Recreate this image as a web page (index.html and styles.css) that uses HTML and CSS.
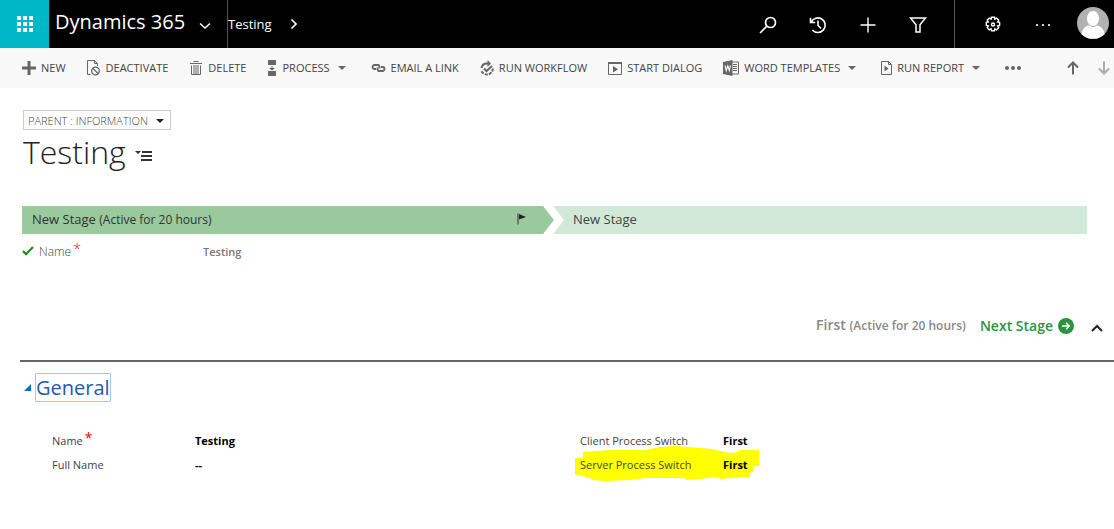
FILE: index.html
```html
<!DOCTYPE html>
<html lang="en">
<head>
    <meta charset="UTF-8">
    <meta name="viewport" content="width=device-width, initial-scale=1.0">
    <title>Parent: Testing - Dynamics 365</title>
    <link rel="stylesheet" href="styles.css">
</head>
<body>
    <header class="navbar">
        <button class="launcher" aria-label="Apps">
            <svg width="16" height="16" viewBox="0 0 16 16" fill="#fff"><path d="M0 0h4v4H0zM6 0h4v4H6zM12 0h4v4h-4zM0 6h4v4H0zM6 6h4v4H6zM12 6h4v4h-4zM0 12h4v4H0zM6 12h4v4H6zM12 12h4v4h-4z"/></svg>
        </button>
        <button class="brand">
            <span>Dynamics 365</span>
            <svg width="12" height="8" viewBox="0 0 12 8" fill="none" stroke="#fff" stroke-width="1.5"><path d="M1 1.5l5 4.500 5-4.500"/></svg>
        </button>
        <a class="crumb" href="#">
            <span>Testing</span>
            <svg width="8" height="12" viewBox="0 0 8 12" fill="none" stroke="#fff" stroke-width="1.7"><path d="M1.500 1.500L6 6l-4.500 4.500"/></svg>
        </a>
        <div class="nav-tools">
            <button class="tool" aria-label="Search">
                <svg width="18" height="18" viewBox="0 0 18 18" fill="none" stroke="#fff" stroke-width="1.7"><circle cx="11.500" cy="6.500" r="5"/><path d="M8 10l-7 7"/></svg>
            </button>
            <button class="tool" aria-label="Recent">
                <svg width="18" height="18" viewBox="0 0 18 18" fill="none" stroke="#fff" stroke-width="1.600"><path d="M2.200 6.200A7.300 7.300 0 1 1 3.400 14M1.500 1.800v4.700h4.700M9 4.500v5l3 2.800"/></svg>
            </button>
            <button class="tool" aria-label="Create">
                <svg width="16" height="16" viewBox="0 0 16 16" fill="none" stroke="#fff" stroke-width="1.400"><path d="M8 .5v15M.5 8h15"/></svg>
            </button>
            <button class="tool" aria-label="Advanced find">
                <svg width="18" height="16" viewBox="0 0 18 16" fill="none" stroke="#fff" stroke-width="1.500"><path d="M1.500 1h15L11 7.700V15H7V7.700z"/></svg>
            </button>
        </div>
        <div class="nav-user">
            <button class="tool" aria-label="Settings">
                <svg width="18" height="18" viewBox="0 0 18 18" fill="none" stroke="#fff" stroke-width="1.400"><path d="M7.500 1.200h3l.4 1.900 1.700-1 2.100 2.100-1.100 1.700 2 .4v3.200l-2 .4 1.100 1.800-2.100 2.200-1.800-1.100-.4 2H7.500l-.4-2-1.800 1.100-2.100-2.200 1.100-1.800-2-.4V6.300l2-.4-1.100-1.700 2.100-2.100 1.800 1z"/><circle cx="9" cy="8.500" r="1.500"/></svg>
            </button>
            <button class="tool" aria-label="More">
                <svg width="16" height="4" viewBox="0 0 16 4" fill="#ccc"><path d="M1 1h2v2H1zM7 1h2v2H7zM13 1h2v2h-2z"/></svg>
            </button>
            <button class="avatar" aria-label="Account">
                <svg width="32" height="32" viewBox="0 0 32 32"><clipPath id="round"><circle cx="16" cy="16" r="16"/></clipPath><g clip-path="url(#round)"><path fill="#b1b1b1" d="M0 0h32v32H0z"/><path fill="#fff" stroke="#b1b1b1" d="M3.500 32c0-9 4-14 9-14h7c5 0 9 5 9 14z"/><ellipse cx="16" cy="11.500" rx="6.500" ry="8" fill="#fff" stroke="#b1b1b1"/></g></svg>
            </button>
        </div>
    </header>

    <nav class="commands">
        <button class="command">
            <svg width="14" height="14" viewBox="0 0 14 14" fill="#666"><path d="M5.500 0h3v5.500H14v3H8.500V14h-3V8.500H0v-3h5.500z"/></svg>
            NEW
        </button>
        <button class="command">
            <svg width="14" height="16" viewBox="0 0 14 16" fill="none" stroke="#666"><path d="M3.500 14.500h-3V.5h7l3 3V6M7.500.5v3h3"/><circle cx="8.500" cy="11" r="3.800" stroke-width="1.300"/><path d="M6 8.500l5 5" stroke-width="1.300"/></svg>
            DEACTIVATE
        </button>
        <button class="command">
            <svg width="14" height="14" viewBox="0 0 14 14" fill="none" stroke="#666"><path d="M4.500.5h5M1 2.500h12" stroke-width="1.200"/><path d="M2.500 4.500v9h9v-9M5 4v9M7 4v9M9 4v9"/></svg>
            DELETE
        </button>
        <button class="command">
            <svg width="10" height="16" viewBox="0 0 10 16" fill="#666"><path d="M1 0h8v5H1zM1 11h8v5H1zM4.500 6h1v2H8l-3 2.500L2 8h2.500z"/></svg>
            PROCESS
            <span class="caret"></span>
        </button>
        <button class="command">
            <svg width="15" height="8" viewBox="0 0 15 8" fill="none" stroke="#666" stroke-width="1.800"><path d="M5 5H3.500A2 2 0 0 1 3.500 1H7q1.500 0 1.500 2v1.500M10 3h1.500A2 2 0 0 1 11.500 7H8Q6.500 7 6.500 5V3.500"/></svg>
            EMAIL A LINK
        </button>
        <button class="command">
            <svg width="14" height="16" viewBox="0 0 14 16" fill="none" stroke="#666" stroke-width="2"><path d="M1.500 8A5.500 5.500 0 0 1 7 3.500h1"/><path d="M7.500 0v7L11 3.500z" fill="#666" stroke="none"/><path d="M12.800 8.500A5.900 5.900 0 0 1 1.500 11" stroke-dasharray="3 1.200"/><path d="M4 8.500l2.500 2.500L12 6"/></svg>
            RUN WORKFLOW
        </button>
        <button class="command">
            <svg width="14" height="14" viewBox="0 0 14 14" fill="none" stroke="#666"><path d="M.5 1.500h13v12H.5z"/><path d="M0 1h14v2H0zM5 5l5 3.200-5 3.300z" fill="#666" stroke="none"/></svg>
            START DIALOG
        </button>
        <button class="command">
            <svg width="16" height="16" viewBox="0 0 16 16" fill="none" stroke="#666"><path d="M9 2h6.500v12H9M10 4.500h4M10 6.500h4M10 8.500h4M10 10.500h4"/><path d="M0 2l9.500-2v16L0 14z" fill="#666" stroke="none"/><path d="M2 5.500l1.200 5L4.800 6l1.500 4.500 1.200-5" stroke="#fff" stroke-width="1.100"/></svg>
            WORD TEMPLATES
            <span class="caret"></span>
        </button>
        <button class="command">
            <svg width="11" height="14" viewBox="0 0 11 14" fill="none" stroke="#666"><path d="M.5.500h7l3 3v10H.5zM7.500.5v3h3"/><path d="M3.500 4.500l4 3-4 3z" fill="#666" stroke="none"/></svg>
            RUN REPORT
            <span class="caret"></span>
        </button>
        <button class="command" aria-label="More commands">
            <svg width="16" height="4" viewBox="0 0 16 4" fill="#666"><circle cx="2" cy="2" r="2"/><circle cx="8" cy="2" r="2"/><circle cx="14" cy="2" r="2"/></svg>
        </button>
        <div class="record-nav">
            <button class="command" aria-label="Previous record">
                <svg width="12" height="14" viewBox="0 0 12 14" fill="none" stroke="#666" stroke-width="2"><path d="M6 13.500V2M1 6.500l5-5 5 5"/></svg>
            </button>
            <button class="command" aria-label="Next record">
                <svg width="12" height="14" viewBox="0 0 12 14" fill="none" stroke="#aaa" stroke-width="2"><path d="M6 .5V12M1 7.500l5 5 5-5"/></svg>
            </button>
        </div>
    </nav>

    <main>
        <div class="record-head">
            <button class="form-select">PARENT : INFORMATION <span class="caret dark"></span></button>
            <div class="title-row">
                <h1>Testing</h1>
                <button class="list-toggle" aria-label="Open form navigation">
                    <svg width="18" height="12" viewBox="0 0 18 12" fill="#333"><path d="M0 1h6L3 4zM7 1h10v2H7zM6 5h11v2H6zM6 9h11v2H6z"/></svg>
                </button>
            </div>
        </div>

        <section class="process">
            <div class="stages">
                <button class="stage active">
                    <span>New Stage <small>(Active for 20 hours)</small></span>
                    <svg width="9" height="12" viewBox="0 0 9 12"><path d="M1 .5v11" stroke="#333"/><path d="M2 1l7 3-7 2.500z" fill="#222"/></svg>
                </button>
                <button class="stage">New Stage</button>
            </div>
            <dl class="step">
                <dt>
                    <svg width="12" height="10" viewBox="0 0 12 10" fill="none" stroke="#1b8a1b" stroke-width="2.200"><path d="M1 5l3 3.200L11 1"/></svg>
                    <span>Name<sup>*</sup></span>
                </dt>
                <dd>Testing</dd>
            </dl>
            <div class="stage-actions">
                <span class="entity">First <small>(Active for 20 hours)</small></span>
                <button class="next">
                    Next Stage
                    <svg width="16" height="16" viewBox="0 0 16 16"><circle cx="8" cy="8" r="8" fill="#2b9440"/><path d="M4 8h7M8 4.800L11.200 8 8 11.200" fill="none" stroke="#fff" stroke-width="1.500"/></svg>
                </button>
                <button class="collapse" aria-label="Collapse process">
                    <svg width="12" height="8" viewBox="0 0 12 8" fill="none" stroke="#222" stroke-width="2"><path d="M1 7l5-5 5 5"/></svg>
                </button>
            </div>
        </section>

        <section class="general">
            <h2>
                <svg width="7" height="7" viewBox="0 0 7 7"><path d="M7 0v7H0z" fill="#0072c6"/></svg>
                <a href="#general">General</a>
            </h2>
            <div class="fields" id="general">
                <dl>
                    <div class="field"><dt>Name<sup>*</sup></dt><dd>Testing</dd></div>
                    <div class="field"><dt>Full Name</dt><dd>--</dd></div>
                </dl>
                <dl>
                    <div class="field"><dt>Client Process Switch</dt><dd>First</dd></div>
                    <div class="field">
                        <dt>Server Process Switch</dt><dd>First</dd>
                        <svg class="marker" width="186" height="36" viewBox="0 0 186 36"><path fill="#ff0" d="M0 12H8V6L35 4H70L85 1 100 0 125 2 137 3 155 7 163 6 165 4H184V20H178V26L175 27V31L155 32 145 33 142 31 125 33 112 34 108 32H72L55 34 30 35 18 34 15 32 3 29 0 28z"/></svg>
                    </div>
                </dl>
            </div>
        </section>
    </main>
</body>
</html>
```
FILE: styles.css
```css
* {
    box-sizing: border-box;
}

body {
    margin: 0;
    background: #fff;
    color: #444;
    font-family: 'Segoe UI', 'Open Sans', 'Noto Sans', sans-serif;
    font-size: 12px;
    line-height: 16px;
}

button {
    margin: 0;
    padding: 0;
    border: 0;
    background: none;
    color: inherit;
    font: inherit;
    cursor: pointer;
}

a {
    color: inherit;
    text-decoration: none;
}

svg {
    display: block;
    flex: none;
}

h1, h2, dl, dd {
    margin: 0;
}

main {
    padding-bottom: 24px;
}

/* top bar */
.navbar {
    display: flex;
    height: 48px;
    background: #000;
    color: #fff;
}

.launcher {
    display: flex;
    align-items: center;
    justify-content: center;
    width: 49px;
    background: #00b7c7;
}

.brand {
    display: flex;
    align-items: center;
    justify-content: space-between;
    width: 179px;
    padding: 0 16px 4px 6px;
    border-right: 1px solid #555;
    font-size: 20px;
    line-height: 24px;
}

.brand svg {
    margin-top: 8px;
}

.crumb {
    display: flex;
    align-items: center;
    gap: 18px;
    font-size: 13px;
}

.nav-tools {
    display: flex;
    margin-left: auto;
    padding-right: 11px;
    border-right: 1px solid #555;
}

.nav-user {
    display: flex;
    padding-left: 13px;
}

.tool {
    display: flex;
    align-items: center;
    justify-content: center;
    width: 50px;
    padding-top: 2px;
}

.avatar {
    padding: 0 5px 2px 9px;
}

/* command bar */
.commands {
    display: flex;
    align-items: center;
    gap: 21px;
    height: 40px;
    padding: 0 4px 0 22px;
    background: #f8f8f8;
    font-size: 11px;
}

.command {
    display: flex;
    align-items: center;
    gap: 5px;
    white-space: nowrap;
}

.caret {
    border: 4px solid transparent;
    border-top-color: #666;
    border-bottom: 0;
    margin: 0 4px 0 3px;
}

.caret.dark {
    border-top-color: #222;
    margin: 0;
}

.record-nav {
    display: flex;
    gap: 19px;
    margin-left: auto;
}

/* record title */
.record-head {
    padding: 22px 23px 0;
}

.form-select {
    display: flex;
    align-items: center;
    gap: 8px;
    height: 20px;
    padding: 2px 6px 0 4px;
    border: 1px solid #ccc;
    font-size: 11px;
    font-weight: 300;
}

.title-row {
    display: flex;
    align-items: center;
    gap: 9px;
}

h1 {
    color: #222;
    font-size: 32px;
    font-weight: 300;
    line-height: 44px;
}

.list-toggle {
    padding-top: 8px;
}

/* process flow */
.process {
    margin: 32px 0 0 20px;
    padding: 0 0 24px 2px;
    border-bottom: 2px solid #666;
}

.stages {
    display: flex;
    margin-right: 27px;
}

/* arrow tips overlap by one pixel */
.stage {
    flex: 1 1 0;
    height: 28px;
    padding: 0 20px 2px;
    background: #d3e9d7;
    clip-path: polygon(0 0, 100% 0, 100% 100%, 0 100%, 11px 50%);
    font-size: 13px;
    text-align: left;
}

.stage.active {
    display: flex;
    align-items: center;
    justify-content: space-between;
    margin-right: -1px;
    padding: 0 28px 2px 10px;
    background: #99c99d;
    clip-path: polygon(0 0, calc(100% - 11px) 0, 100% 50%, calc(100% - 11px) 100%, 0 100%);
    color: #333;
}

small {
    font-size: 12px;
}

.step {
    display: flex;
    padding-top: 10px;
}

.step dt {
    display: flex;
    gap: 5px;
    width: 181px;
    font-weight: 300;
}

.step dt svg {
    margin-top: 2px;
}

.step dd {
    color: #777;
    font-size: 11px;
    font-weight: 600;
}

sup {
    margin-left: 2px;
    color: #e00;
    font-size: 14px;
    line-height: 0;
    vertical-align: 2px;
}

.stage-actions {
    display: flex;
    align-items: center;
    justify-content: flex-end;
    gap: 14px;
    padding: 55px 11px 0 0;
    font-size: 14px;
    line-height: 20px;
}

.entity {
    color: #888;
    font-weight: 600;
}

.entity small {
    font-size: 12px;
}

.next {
    display: flex;
    align-items: center;
    gap: 5px;
    color: #2b9440;
    font-weight: 600;
}

.collapse {
    padding: 4px 0 0 3px;
}

/* form section */
.general {
    padding: 11px 6px 0 24px;
}

h2 {
    display: flex;
    align-items: center;
    gap: 4px;
    color: #2259b2;
    font-size: 20px;
    font-weight: 400;
    line-height: 27px;
}

h2 a {
    border: 1px solid #a5c3fa;
    border-radius: 1px;
}

.fields {
    display: grid;
    grid-template-columns: 1fr 1fr;
    padding: 27px 0 0 28px;
}

.field {
    display: flex;
    position: relative;
    height: 24px;
    font-size: 11px;
    line-height: 24px;
}

.field dt {
    width: 143px;
}

.field dd {
    color: #000;
    font-weight: 700;
}

/* highlighter stroke behind a field */
.marker {
    position: absolute;
    top: -7px;
    left: -5px;
    z-index: -1;
}
```
